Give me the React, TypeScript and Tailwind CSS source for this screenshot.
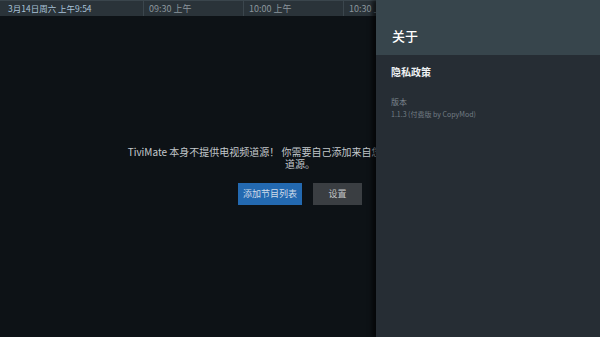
import React from 'react';

const slots = ['09:30 上午', '10:00 上午', '10:30 上午'];

export default function App() {
  return (
    <div
      className="relative w-[600px] h-[337px] overflow-hidden bg-[#0d1216]"
      style={{ fontFamily: '"Noto Sans CJK SC", "Noto Sans", sans-serif' }}
    >
      {/* Guide area */}
      <div className="flex flex-col h-full">
        <div className="flex h-[16px] shrink-0 items-center bg-[#2a3339] border-t border-[#3a454c] text-[9px] leading-none">
          <div className="w-[143px] shrink-0 pl-2 text-[8.5px] text-[#a8c2d8]">3月14日周六 上午9:54</div>
          {slots.map((s) => (
            <div key={s} className="w-[100px] shrink-0 h-full flex items-center border-l border-[#3b464d] pl-[5px] text-[#8b959c] whitespace-nowrap">
              {s}
            </div>
          ))}
        </div>

        <div className="flex flex-1 flex-col items-center justify-center pb-[2px]">
          <p className="text-center text-[10px] leading-[12px] text-[#c3c8cc]">
            <span className="whitespace-nowrap">TiviMate 本身不提供电视频道源！ 你需要自己添加来自您IPTV服务提供商的频</span>
            <br />
            道源。
          </p>
          <div className="mt-[13px] flex gap-[11px] text-[9px]">
            <button className="h-[22px] w-[64px] bg-[#2369b0] text-[#cfdcea]">添加节目列表</button>
            <button className="h-[22px] w-[49px] bg-[#3a3e42] text-[#c2c4c6]">设置</button>
          </div>
        </div>
      </div>

      {/* About panel */}
      <div className="absolute right-0 top-0 flex h-full w-[224px] flex-col bg-[#262d34] shadow-[-4px_0_4px_rgba(0,0,0,0.6)]">
        <div className="h-[55px] shrink-0 bg-[#37454c] pl-4 pt-[27px] text-[13px] font-medium leading-[18px] text-white">
          关于
        </div>
        <div className="pl-[15px] pt-[10px] text-[10px] font-bold leading-[14px] text-[#eef1f3]">隐私政策</div>
        <div className="pl-[15px] pt-[17px] text-[8px] leading-[11px] text-[#7c868e]">版本</div>
        <div className="pl-[15px] pt-[2px] text-[7px] leading-[10px] text-[#737d85]">1.1.3 (付费版 by CopyMod)</div>
      </div>
    </div>
  );
}
